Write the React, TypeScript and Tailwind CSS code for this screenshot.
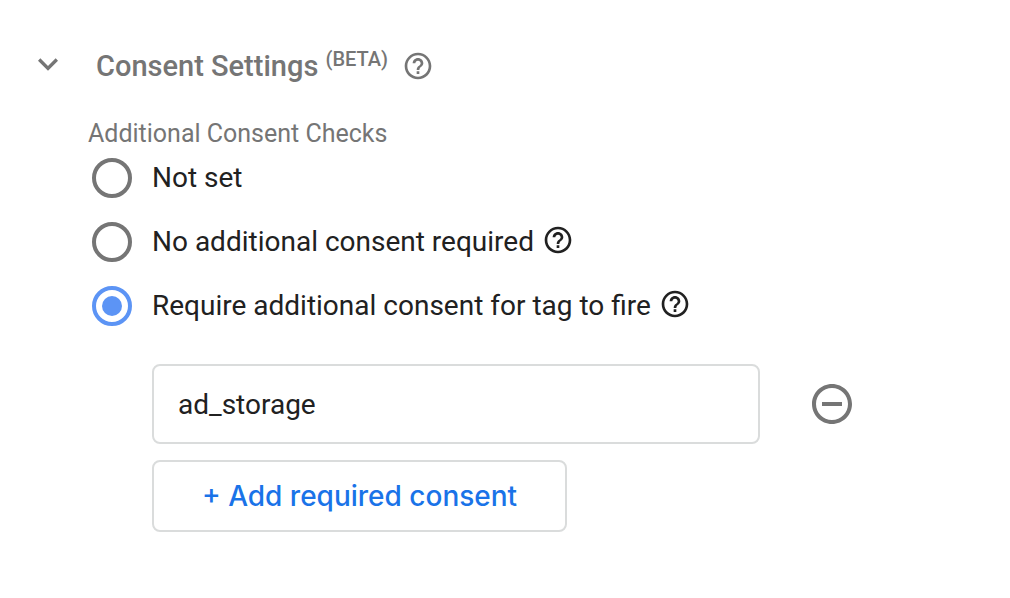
import { useState } from "react";
import { MdExpandMore, MdHelpOutline, MdRemoveCircleOutline } from "react-icons/md";

const OPTIONS = [
  { value: "not-set", label: "Not set", help: false },
  { value: "none", label: "No additional consent required", help: true },
  { value: "required", label: "Require additional consent for tag to fire", help: true },
];

export default function App() {
  const [selected, setSelected] = useState("required");
  const [consents, setConsents] = useState(["ad_storage"]);

  return (
    <section className="min-h-screen bg-white pt-11 pr-8 pb-16 pl-7 font-['Roboto',sans-serif] text-[#212121]">
      <header className="flex items-center text-[#757575]">
        <button type="button" aria-label="Collapse consent settings" className="self-start">
          <MdExpandMore className="size-10" aria-hidden />
        </button>
        <h2 className="ml-7 text-[29px] leading-11 font-medium">
          Consent Settings <sup className="text-[20px]">(BETA)</sup>
        </h2>
        <button type="button" aria-label="About consent settings" className="ml-3.5">
          <MdHelpOutline className="size-8" aria-hidden />
        </button>
      </header>

      <fieldset className="mt-[30px] ml-15">
        <legend className="text-[25px] leading-8 text-[#757575]">Additional Consent Checks</legend>
        <div className="mt-2 flex flex-col gap-6 pl-1">
          {OPTIONS.map((option) => (
            <div key={option.value} className="flex items-center">
              <input
                type="radio"
                id={option.value}
                name="consent"
                checked={selected === option.value}
                onChange={() => setSelected(option.value)}
                className="size-10 shrink-0 appearance-none rounded-full border-4 border-[#757575] bg-clip-content p-1.5 checked:border-[#5c94f5] checked:bg-[#5c94f5]"
              />
              <label htmlFor={option.value} className="pl-5 text-[28px] leading-10">
                {option.label}
              </label>
              {option.help && (
                <button type="button" aria-label={`About: ${option.label}`} className="ml-2 pb-1">
                  <MdHelpOutline className="size-8" aria-hidden />
                </button>
              )}
            </div>
          ))}
        </div>
      </fieldset>

      <div className="mt-[38px] ml-31 flex flex-col items-start gap-4">
        {consents.map((consent, index) => (
          <div key={index} className="flex w-full items-center gap-12">
            <input
              type="text"
              aria-label="Required consent"
              value={consent}
              onChange={(e) =>
                setConsents(consents.map((c, i) => (i === index ? e.target.value : c)))
              }
              className="h-20 w-full max-w-[608px] rounded-lg border-2 border-[#dadcdc] px-6 text-[28px]"
            />
            <button
              type="button"
              aria-label="Remove consent"
              className="text-[#757575]"
              onClick={() => setConsents(consents.filter((_, i) => i !== index))}
            >
              <MdRemoveCircleOutline className="size-12" aria-hidden />
            </button>
          </div>
        ))}
        <button
          type="button"
          onClick={() => setConsents([...consents, ""])}
          className="rounded-lg border-2 border-[#dadcdc] px-12 py-4 font-['Inter','Roboto',sans-serif] text-[28px] leading-9 font-medium text-[#1a73e8]"
        >
          + Add required consent
        </button>
      </div>
    </section>
  );
}
